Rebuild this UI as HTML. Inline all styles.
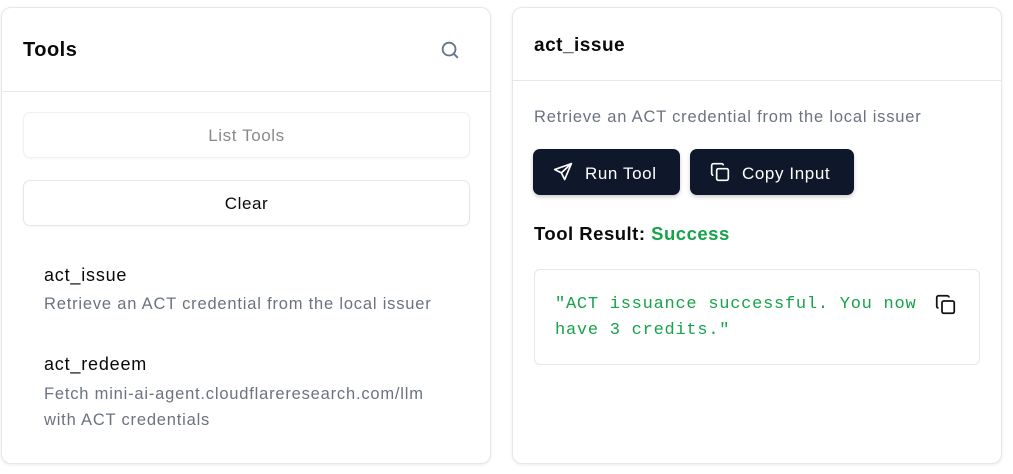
<!DOCTYPE html><html><head><style>
body{margin:0;background:#fff;width:1013px;height:474px;position:relative;font-family:"Liberation Sans",sans-serif;color:#0a0a0a;overflow:hidden}
.card{position:absolute;top:7px;height:455px;background:#fff;border:1px solid #e5e7eb;border-radius:10px;box-shadow:0 1px 3px rgba(0,0,0,.08)}
.a{position:absolute;white-space:nowrap}
.s{letter-spacing:.8px}
.btn{position:absolute;border:1px solid #e5e7eb;border-radius:7px;background:#fff;text-align:center;font-size:17px;letter-spacing:.6px;box-shadow:0 1px 2px rgba(0,0,0,.04)}
.dark{position:absolute;top:149px;height:46px;background:#0f172a;color:#fff;border-radius:7px;font-size:17px;letter-spacing:.6px;box-shadow:0 2px 4px rgba(0,0,0,.2)}
</style></head><body>
<div class="card" style="left:1px;width:488px">
 <div class="a" style="left:21px;top:31px;font-size:20px;font-weight:bold;letter-spacing:.5px">Tools</div>
 <svg class="a" style="left:437px;top:31px" width="22" height="22" viewBox="0 0 24 24" fill="none" stroke="#64748b" stroke-width="2" stroke-linecap="round"><circle cx="11" cy="11" r="7"/><path d="M20 20l-4-4"/></svg>
 <div style="position:absolute;left:0;right:0;top:83px;border-top:1px solid #e5e7eb"></div>
 <div class="btn" style="left:21px;top:104px;width:445px;height:44px;line-height:46px;color:#8a8a8a;border-color:#f0f0f0">List Tools</div>
 <div class="btn" style="left:21px;top:172px;width:445px;height:44px;line-height:46px">Clear</div>
 <div class="a s" style="left:42px;top:257px;font-size:18px">act_issue</div>
 <div class="a s" style="left:42px;top:287px;font-size:16.5px;color:#6b7280">Retrieve an ACT credential from the local issuer</div>
 <div class="a s" style="left:42px;top:346px;font-size:18px">act_redeem</div>
 <div class="a s" style="left:42px;top:373px;font-size:16.5px;color:#6b7280;line-height:26px;white-space:normal;width:400px">Fetch mini-ai-agent.cloudflareresearch.com/llm with ACT credentials</div>
</div>
<div class="card" style="left:512px;width:488px">
 <div class="a" style="left:21px;top:27px;font-size:19px;font-weight:bold;letter-spacing:.5px">act_issue</div>
 <div style="position:absolute;left:0;right:0;top:72px;border-top:1px solid #e5e7eb"></div>
 <div class="a s" style="left:21px;top:100px;font-size:16.5px;color:#6b7280">Retrieve an ACT credential from the local issuer</div>
</div>
<div class="dark" style="left:533px;width:147px">
 <svg class="a" style="left:20px;top:13px" width="20" height="20" viewBox="0 0 24 24" fill="none" stroke="#fff" stroke-width="2" stroke-linejoin="round" stroke-linecap="round"><path d="M22 2L2 9l8 4 4 8z"/><path d="M22 2L10 13"/></svg>
 <div class="a" style="left:52px;top:15px">Run Tool</div>
</div>
<div class="dark" style="left:690px;width:164px">
 <svg class="a" style="left:20px;top:13px" width="20" height="20" viewBox="0 0 24 24" fill="none" stroke="#fff" stroke-width="2" stroke-linejoin="round"><rect x="8" y="8" width="14" height="14" rx="2"/><path d="M4 16c-1 0-2-1-2-2V4c0-1 1-2 2-2h10c1 0 2 1 2 2"/></svg>
 <div class="a" style="left:52px;top:15px">Copy Input</div>
</div>
<div class="a" style="left:534px;top:223px;font-size:18.5px;font-weight:bold;letter-spacing:.5px">Tool Result: <span style="color:#16a34a">Success</span></div>
<div style="position:absolute;left:534px;top:269px;width:444px;height:94px;border:1px solid #e5e7eb;border-radius:6px;background:#fff"></div>
<div class="a" style="left:555px;top:292px;font-family:'Liberation Mono',monospace;font-size:17px;letter-spacing:.75px;line-height:26px;color:#16a34a;white-space:pre">"ACT issuance successful. You now
have 3 credits."</div>
<svg class="a" style="left:935px;top:294px" width="21" height="21" viewBox="0 0 24 24" fill="none" stroke="#111" stroke-width="2" stroke-linejoin="round"><rect x="8" y="8" width="14" height="14" rx="2"/><path d="M4 16c-1 0-2-1-2-2V4c0-1 1-2 2-2h10c1 0 2 1 2 2"/></svg>
</body></html>
